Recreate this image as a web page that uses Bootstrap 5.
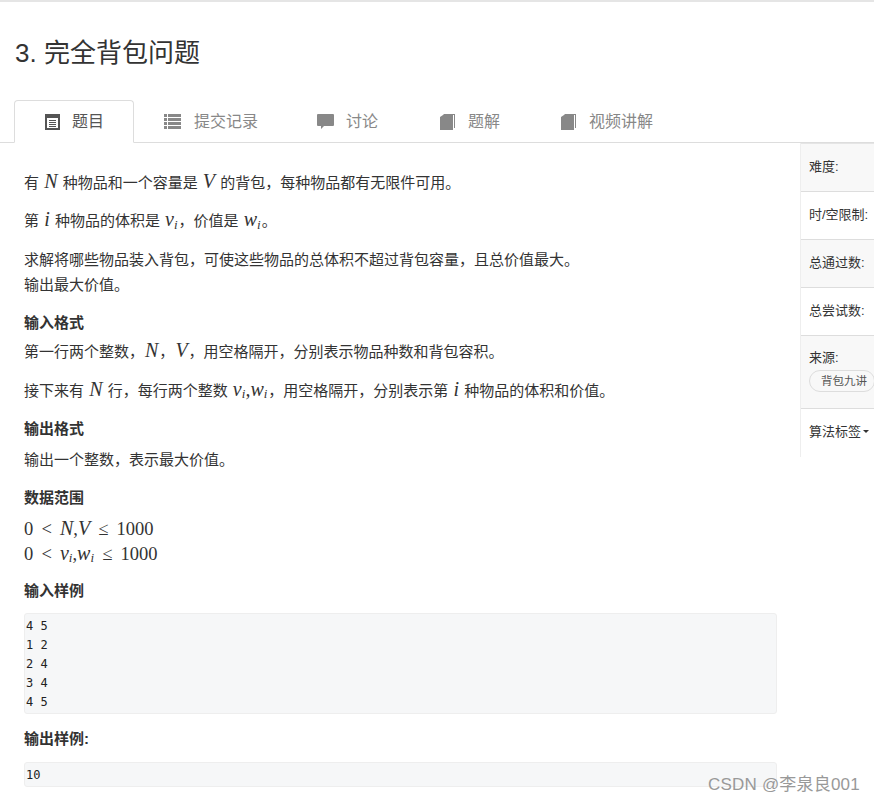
<!DOCTYPE html>
<html lang="zh">
<head>
<meta charset="utf-8">
<title>3. 完全背包问题</title>
<link href="https://cdn.jsdelivr.net/npm/bootstrap@5.3.0/dist/css/bootstrap.min.css" rel="stylesheet">
<style>
html,body{height:803px;overflow:hidden;}
body{font-family:"Liberation Sans","Noto Sans CJK SC",sans-serif;font-size:15px;line-height:25px;color:#333;background:#fff;border-top:2px solid #e5e5e5;position:relative;}
.ptitle{font-size:26px;font-weight:400;line-height:34px;margin:0;padding:34px 0 0 15px;color:#333;height:98px;}
.ptabs{padding-left:14px;border-bottom:1px solid #ddd;height:43px;}
.ptabs .nav-link{display:flex;align-items:center;gap:13px;height:43px;padding:0 29px;font-size:16px;line-height:22px;color:#888;border-radius:4px 4px 0 0;}
.ptabs .nav-link.active{color:#555;border-color:#ddd #ddd #fff;padding:0 29px 0 30px;gap:12px;}
.ptabs svg{display:block;flex:none;fill:currentColor;}
.tab-a{margin-left:-1px;}
.tab-a .nav-link{gap:12px;}
.tab-c{margin-left:2px;}
.tab-b{margin-left:1px;}
.pmain{width:800px;flex:none;padding:26.5px 23px 0 24px;}
.pmain p{margin:0 0 13.5px;}
.phead{font-weight:700;margin:0 0 5.5px;line-height:25px;}
.phead.snug{margin-bottom:4px;}
.mth{font-family:"Liberation Serif",serif;font-style:italic;font-size:20px;line-height:1;margin:0 1px;}
.mth sub{font-size:13px;bottom:-.2em;line-height:0;}
.rng{font-family:"Liberation Serif",serif;font-size:18.5px;line-height:24px;margin:0 0 12px;word-spacing:3.5px;}
.rng i{font-size:20px;}
.rng sub{font-size:13px;bottom:-.2em;line-height:0;}
.psample{font-family:"DejaVu Sans Mono",monospace;font-size:12px;line-height:19px;margin:10.5px 0 12px;padding:3px 2px 1px 1px;background:#f6f7f8;border:1px solid #eee;border-radius:3px;color:#222;overflow:hidden;}
.pside{width:74px;flex:none;height:314px;border-left:1px solid #eee;font-size:13px;overflow:hidden;}
.sitem{height:48px;border-bottom:1px solid #ddd;padding:0 0 2px 8px;display:flex;align-items:center;white-space:nowrap;color:#333;}
.sitem.odd{background:#f8f8f8;}
.sitem.first{height:49px;border-top:1px solid #e5e5e5;}
.sitem.tall{height:73px;display:block;padding-top:10px;line-height:23px;}
.sitem.last{border-bottom:0;padding-bottom:4px;}
.ppill{display:inline-block;font-size:11.5px;line-height:20px;padding:0 7px 0 11px;border:1px solid #ddd;border-radius:11px;color:#555;background:#f8f8f8;white-space:nowrap;}
.pcaret{display:inline-block;width:0;height:0;border-top:3px solid #333;border-left:3px solid transparent;border-right:3px solid transparent;margin-left:2px;}
.wmark{position:absolute;left:708px;top:771px;font-size:17px;letter-spacing:.2px;line-height:24px;color:#999;white-space:nowrap;}
</style>
</head>
<body>
<h1 class="ptitle">3. 完全背包问题</h1>
<ul class="nav nav-tabs ptabs">
  <li class="nav-item"><a class="nav-link active" href="#"><svg width="15" height="16" viewBox="0 0 15 16"><path fill-rule="evenodd" d="M0 0h15v16H0zM2 4v10h11V4zM4 6h7v1H4zM4 8h7v1H4zM4 10h7v1H4zM4 12h7v1H4z"/></svg>题目</a></li>
  <li class="nav-item"><a class="nav-link" href="#"><svg width="17" height="15" viewBox="0 0 17 15"><path d="M0 0h3v3H0zM4 0h13v3H4zM0 4h3v3H0zM4 4h13v3H4zM0 8h3v3H0zM4 8h13v3H4zM0 12h3v3H0zM4 12h13v3H4z"/></svg>提交记录</a></li>
  <li class="nav-item tab-a"><a class="nav-link" href="#"><svg width="17" height="15" viewBox="0 0 17 15"><path d="M1 0h15a1 1 0 0 1 1 1v10a1 1 0 0 1-1 1H7l-3 3v-3H1a1 1 0 0 1-1-1V1a1 1 0 0 1 1-1z"/></svg>讨论</a></li>
  <li class="nav-item tab-c"><a class="nav-link" href="#"><svg width="15" height="16" viewBox="0 0 15 16"><path d="M3 0h12v14h-1V1H4zM0 3l3-2h10v15H0z"/></svg>题解</a></li>
  <li class="nav-item tab-b"><a class="nav-link" href="#"><svg width="15" height="16" viewBox="0 0 15 16"><path d="M3 0h12v14h-1V1H4zM0 3l3-2h10v15H0z"/></svg>视频讲解</a></li>
</ul>
<div class="d-flex">
  <div class="pmain">
    <p>有 <span class="mth">N</span> 种物品和一个容量是 <span class="mth">V</span> 的背包，每种物品都有无限件可用。</p>
    <p>第 <span class="mth">i</span> 种物品的体积是 <span class="mth">v<sub>i</sub></span>，价值是 <span class="mth">w<sub>i</sub></span>。</p>
    <p>求解将哪些物品装入背包，可使这些物品的总体积不超过背包容量，且总价值最大。<br>输出最大价值。</p>
    <div class="phead snug">输入格式</div>
    <p>第一行两个整数，<span class="mth">N</span>，<span class="mth">V</span>，用空格隔开，分别表示物品种数和背包容积。</p>
    <p>接下来有 <span class="mth">N</span> 行，每行两个整数 <span class="mth">v<sub>i</sub>,w<sub>i</sub></span>，用空格隔开，分别表示第 <span class="mth">i</span> 种物品的体积和价值。</p>
    <div class="phead">输出格式</div>
    <p>输出一个整数，表示最大价值。</p>
    <div class="phead">数据范围</div>
    <div class="rng">0 &lt; <i>N</i>,<i>V</i> ≤ 1000<br>0 &lt; <i>v<sub>i</sub></i>,<i>w<sub>i</sub></i> ≤ 1000</div>
    <div class="phead">输入样例</div>
    <pre class="psample">4 5
1 2
2 4
3 4
4 5</pre>
    <div class="phead">输出样例:</div>
    <pre class="psample">10</pre>
  </div>
  <div class="pside">
    <div class="sitem odd first">难度:</div>
    <div class="sitem">时/空限制:</div>
    <div class="sitem odd">总通过数:</div>
    <div class="sitem">总尝试数:</div>
    <div class="sitem odd tall">来源:<br><span class="ppill">背包九讲</span></div>
    <div class="sitem last">算法标签<span class="pcaret"></span></div>
  </div>
</div>
<div class="wmark">CSDN @李泉良001</div>
<script src="https://cdn.jsdelivr.net/npm/bootstrap@5.3.0/dist/js/bootstrap.bundle.min.js"></script>
</body>
</html>
